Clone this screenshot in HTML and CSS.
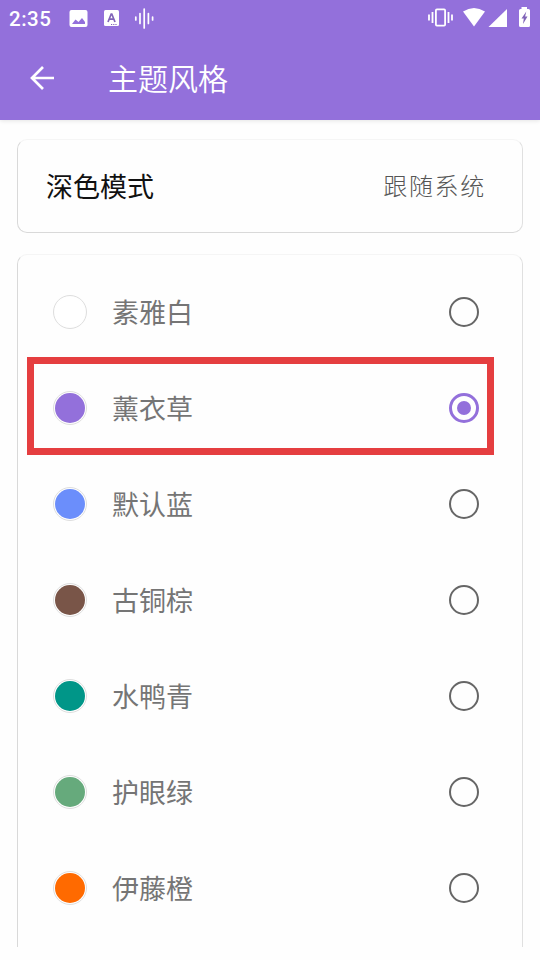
FILE: index.html
```html
<!DOCTYPE html>
<html lang="zh-CN">
<head>
<meta charset="utf-8">
<title>主题风格</title>
<link rel="stylesheet" href="styles.css">
</head>
<body>
<header class="header">
  <div class="status">
    <span class="clock">2:35</span>
    <svg class="status-left" width="90" height="24" viewBox="68 6 90 24">
      <path fill="#fff" fill-rule="evenodd" d="M71.500 10h14a2 2 0 0 1 2 2v13a2 2 0 0 1-2 2h-14a2 2 0 0 1-2-2V12a2 2 0 0 1 2-2zM72 24h13v-2l-3-4-3.500 4-3-2.500z"/>
      <rect x="104" y="10" width="15" height="16" rx="1.500" fill="#fff"/>
      <path fill="none" stroke="#8064b8" stroke-width="1.700" d="M108 22l3.200-8h.6l3.200 8M109 19.200h5"/>
      <path stroke="#8064b8" stroke-dasharray="1.200 1" d="M111 24.500h6.500"/>
      <path stroke="#fff" stroke-width="1.700" stroke-linecap="round" d="M135.800 17v3M140 13.500v10M144.200 9v19M148.400 13.500v10M152.600 17v3"/>
    </svg>
    <svg class="status-right" width="110" height="24" viewBox="424 6 110 24">
      <g fill="none" stroke="#fff" stroke-width="1.800">
        <rect x="435.900" y="9.400" width="9.200" height="16.200" rx="1"/>
        <path d="M432.500 12v11M429 14.500v6M448.500 12v11M452 14.500v6"/>
      </g>
      <path fill="#fff" d="M463 11.500Q474 4.500 485 11.500L474 26.500z"/>
      <path fill="#fff" d="M507 9v18h-18.500z"/>
      <path fill="#fff" d="M521.500 7h5.500v2h1.500a1.500 1.500 0 0 1 1.500 1.500V25.500a1.500 1.500 0 0 1-1.500 1.500h-8a1.500 1.500 0 0 1-1.500-1.500V10.500a1.500 1.500 0 0 1 1.500-1.500h1z"/>
      <path fill="#8064b8" d="M526.300 11.500l-4.800 7h2.300l-.8 5.500 4.500-7.500h-2.400z"/>
    </svg>
  </div>
  <div class="toolbar">
    <svg class="back" width="26" height="26" viewBox="0 0 26 26"><path fill="none" stroke="#fff" stroke-width="2.700" d="M25 13H3M14 2L3 13l11 11"/></svg>
    <h1 class="title">主题风格</h1>
  </div>
</header>
<main class="content">
  <section class="card mode">
    <span class="mode-name">深色模式</span>
    <span class="mode-value">跟随系统</span>
  </section>
  <section class="card themes">
    <div class="row"><i class="swatch white"></i><span class="name">素雅白</span><i class="radio"></i></div>
    <div class="row selected"><i class="swatch lavender"></i><span class="name">薰衣草</span><i class="radio checked"></i></div>
    <div class="row"><i class="swatch blue"></i><span class="name">默认蓝</span><i class="radio"></i></div>
    <div class="row"><i class="swatch brown"></i><span class="name">古铜棕</span><i class="radio"></i></div>
    <div class="row"><i class="swatch teal"></i><span class="name">水鸭青</span><i class="radio"></i></div>
    <div class="row"><i class="swatch green"></i><span class="name">护眼绿</span><i class="radio"></i></div>
    <div class="row"><i class="swatch orange"></i><span class="name">伊藤橙</span><i class="radio"></i></div>
  </section>
</main>
</body>
</html>
```
FILE: styles.css
```css
*, *::before, *::after { box-sizing: border-box; }
body {
  margin: 0;
  height: 960px;
  overflow: hidden;
  background: #fefefe;
  font-family: "Noto Sans CJK SC", sans-serif;
}
.header {
  height: 120px;
  background: #9370db;
  color: #fff;
  box-shadow: 0 1px 4px rgba(0, 0, 0, .1);
}
.status {
  display: flex;
  align-items: center;
  height: 36px;
  padding: 0 6px 0 9px;
}
.clock {
  width: 59px;
  font: 500 20.500px/36px Roboto, sans-serif;
  letter-spacing: .5px;
  padding-top: 2px;
}
.status-right { margin-left: auto; }
.toolbar {
  display: flex;
  align-items: center;
  height: 84px;
  padding-left: 29px;
}
.title {
  margin: 0 0 0 53px;
  padding-bottom: 2px;
  font-size: 30px;
  font-weight: 350;
  line-height: 44px;
}
.content { padding: 19px 17px 0; }
.card {
  border: 1px solid #d9d9d9;
  border-top-color: #f5f5f5;
  border-right-color: #e0e0e0;
  border-radius: 10px;
}
.mode {
  display: flex;
  align-items: center;
  justify-content: space-between;
  height: 94px;
  padding: 0 36px 2px 28px;
}
.mode-name { font-size: 27px; color: #111; }
.mode-value {
  padding-bottom: 2px;
  font-size: 24px;
  font-weight: 300;
  letter-spacing: 1.700px;
  color: #555;
}
.themes {
  height: 693px;
  margin-top: 21px;
  padding: 9px 8px 0 9px;
  border-bottom: 0;
  border-radius: 10px 10px 0 0;
}
.row {
  position: relative;
  display: flex;
  align-items: center;
  height: 96px;
  padding: 0 35px 0 26px;
}
.swatch {
  width: 34px;
  height: 34px;
  border: 1px solid #dedede;
  border-radius: 50%;
  padding: 1px;
  background-clip: content-box;
}
.white { background-color: #fff; }
.lavender { background-color: #9370db; }
.blue { background-color: #6b8efb; }
.brown { background-color: #795548; }
.teal { background-color: #009688; }
.green { background-color: #66aa7c; }
.orange { background-color: #ff6a00; }
.name {
  margin-left: 25px;
  font-size: 27px;
  line-height: 40px;
  color: #757575;
}
.radio {
  display: grid;
  place-items: center;
  width: 30px;
  height: 30px;
  margin-left: auto;
  border: 2.500px solid #666;
  border-radius: 50%;
}
.checked { border: 3px solid #9370db; }
.checked::after {
  content: "";
  width: 14px;
  height: 14px;
  border-radius: 50%;
  background: #9370db;
}
.selected::before {
  content: "";
  position: absolute;
  left: 0;
  top: -3px;
  width: 467px;
  height: 98px;
  border: 7px solid #e53e40;
}
```
